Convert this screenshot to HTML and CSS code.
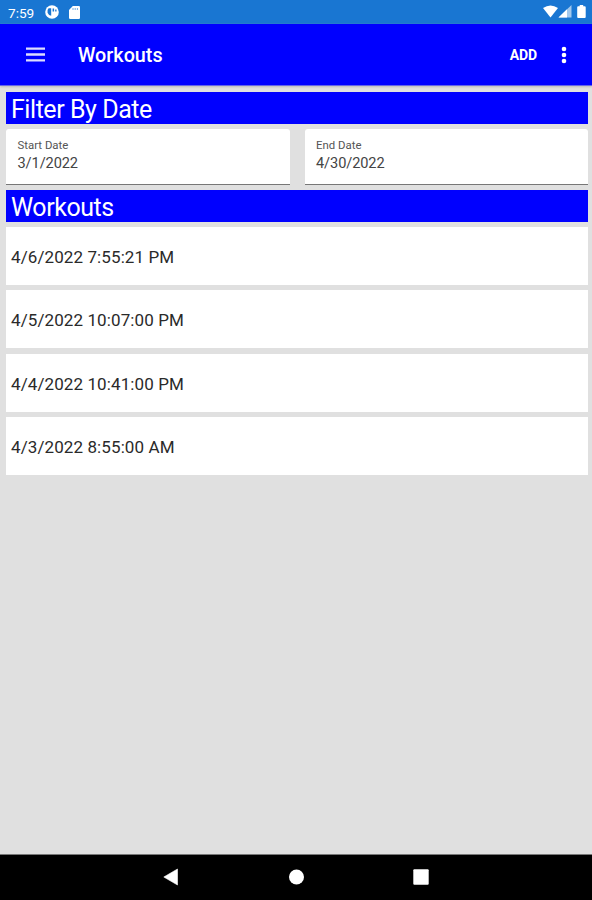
FILE: index.html
```html
<!DOCTYPE html>
<html lang="en">
<head>
<meta charset="utf-8">
<title>Workouts</title>
<link rel="stylesheet" href="styles.css">
</head>
<body>
<div class="screen">
  <div class="status">
    <span class="clock">7:59</span>
    <svg class="status-app" width="14" height="14" viewBox="0 0 14 14"><circle cx="7" cy="7" r="6.8" fill="#fff"/><path d="M3.600 3.200H6.200V10.800A4.500 4.500 0 0 1 3.600 3.200zM7.600 3.400h1.500v3H7.600zM10.200 4.400h1.300v2h-1.300z" fill="#1976d2"/></svg>
    <svg class="status-card" width="11" height="13" viewBox="0 0 11 13"><path d="M3.8 0H9.8A1.2 1.2 0 0 1 11 1.2V11.8A1.2 1.2 0 0 1 9.8 13H1.2A1.2 1.2 0 0 1 0 11.800V4z" fill="#fff"/><path d="M4 2v2M6.200 2v2M8.400 2v2" stroke="#1976d2" stroke-width=".6"/></svg>
    <svg class="status-system" width="44" height="14" viewBox="0 0 44 14"><path d="M0 3Q7.500-2 15 3L7.500 12.500z" fill="#fff"/><path d="M15.500 12.500L28.500 0v12.500z" fill="#fff" opacity=".6"/><path d="M15.500 12.500L24 4.300v8.200z" fill="#fff"/><path d="M36.700 0h3.500v1.200h1.500q1 0 1 1v9.800q0 1-1 1h-6.500q-1 0-1-1V2.200q0-1 1-1h1.500z" fill="#fff"/></svg>
  </div>
  <header class="appbar">
    <svg class="menu" width="19" height="15" viewBox="0 0 19 15"><path d="M0 1.600h19M0 7.500h19M0 13.400h19" stroke="#dcdcff" stroke-width="2.400"/></svg>
    <h1 class="title">Workouts</h1>
    <span class="add">ADD</span>
    <svg class="more" width="6" height="18" viewBox="0 0 6 18"><g fill="#fff"><circle cx="3" cy="3" r="2.300"/><circle cx="3" cy="9" r="2.300"/><circle cx="3" cy="15" r="2.300"/></g></svg>
  </header>
  <main class="content">
    <h2 class="heading">Filter By Date</h2>
    <div class="filters">
      <div class="field"><span class="label">Start Date</span><span class="value">3/1/2022</span></div>
      <div class="field"><span class="label">End Date</span><span class="value">4/30/2022</span></div>
    </div>
    <h2 class="heading">Workouts</h2>
    <div class="list">
      <div class="row">4/6/2022 7:55:21 PM</div>
      <div class="row">4/5/2022 10:07:00 PM</div>
      <div class="row">4/4/2022 10:41:00 PM</div>
      <div class="row">4/3/2022 8:55:00 AM</div>
    </div>
  </main>
  <nav class="navbar">
    <svg width="16" height="18" viewBox="0 0 16 18"><path d="M14.500 1v16L.8 9z" fill="#fff" stroke="#fff" stroke-width=".6" stroke-linejoin="round"/></svg>
    <svg width="16" height="16" viewBox="0 0 16 16"><circle cx="8.500" cy="8" r="7.500" fill="#fff"/></svg>
    <svg width="16" height="16" viewBox="0 0 16 16"><rect x=".3" y=".3" width="15.400" height="15.400" rx="1" fill="#fff"/></svg>
  </nav>
</div>
</body>
</html>
```
FILE: styles.css
```css
* { box-sizing: border-box; }
body { margin: 0; font-family: Roboto, "Liberation Sans", sans-serif; }
h1, h2 { margin: 0; }
svg { display: block; flex: none; }
.screen { width: 592px; height: 900px; display: flex; flex-direction: column; background: #e0e0e0; overflow: hidden; }
.status { height: 24px; flex: none; display: flex; align-items: center; background: #1976d2; color: #fff; padding: 0 5px 0 8px; }
.clock { width: 37px; font-size: 13.6px; line-height: 22px; padding-top: 1px; }
.status-app { margin-right: 10px; }
.status-system { margin-left: auto; }
.appbar { height: 62px; flex: none; display: flex; align-items: center; background: #00f; color: #fff; padding: 0 25px 0 26px; border-bottom: 1px solid #6666e8; box-shadow: 0 1px 2px #bbb; }
.title { margin-left: 33px; font-size: 19.8px; line-height: 24px; font-weight: 500; padding-top: 2px; }
.add { margin-left: auto; font-size: 14px; font-weight: 700; letter-spacing: -.1px; padding-top: 1px; }
.more { margin-left: 24px; }
.content { flex: 1; padding: 6px 4px 0 6px; }
.heading { height: 32px; background: #00f; color: #fff; padding-left: 5px; font-size: 25px; line-height: 35px; font-weight: 400; letter-spacing: -.45px; }
.filters { display: flex; gap: 15px; margin: 5px 0; }
.field { flex: 1; height: 56px; display: flex; flex-direction: column; background: #fff; border-bottom: 1px solid #777; border-radius: 3px 3px 0 0; padding: 9px 12px 0 11.500px; color: #555; }
.label { font-size: 11.4px; line-height: 14px; }
.value { font-size: 14.600px; line-height: 20px; padding-top: 1px; letter-spacing: -.1px; color: #444; }
.list { display: flex; flex-direction: column; gap: 5.300px; margin-top: 5px; }
.row { height: 58px; background: #fff; color: #2a2a2a; padding-left: 5px; font-size: 17px; line-height: 60px; letter-spacing: .1px; }
.navbar { height: 46px; flex: none; display: flex; align-items: center; justify-content: space-between; background: #000; border-top: 1px solid #777; padding: 0 163px 1px; }
```
